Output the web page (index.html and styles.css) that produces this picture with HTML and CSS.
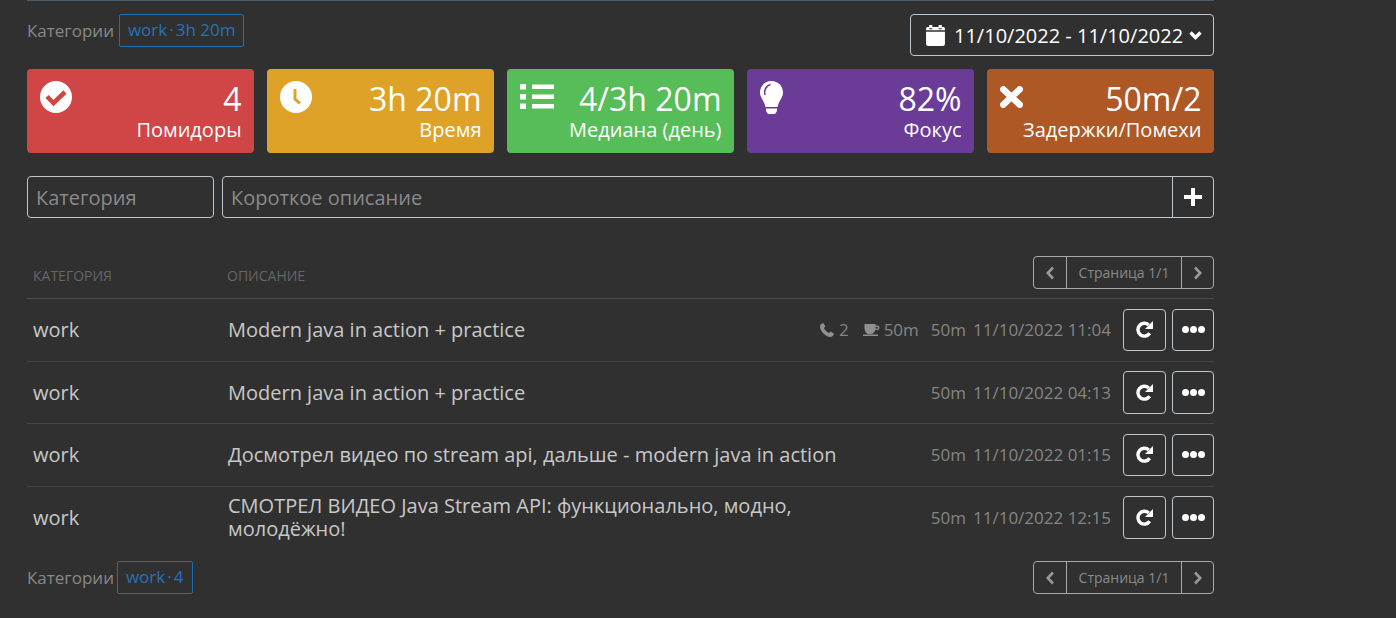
FILE: index.html
```html
<!DOCTYPE html>
<html lang="ru">
<head>
<meta charset="utf-8">
<title>Помидоры</title>
<link rel="stylesheet" href="styles.css">
</head>
<body>
<main class="page">
  <header class="top">
    <div class="cats"><span class="cats-label">Категории</span><a class="tag">work<i class="dot">·</i>3h 20m</a></div>
    <button class="date">
      <svg class="date-cal" viewBox="0 0 18 20"><path fill="#fff" d="M3 0h3v3H3zM12 0h3v3h-3zM1.500 2H3v2h3V2h6v2h3V2h1.500A1.500 1.500 0 0 1 18 3.500V5H0V3.500A1.500 1.500 0 0 1 1.500 2zM0 6.500h18V18a2 2 0 0 1-2 2H2a2 2 0 0 1-2-2z"/></svg>
      <span>11/10/2022 - 11/10/2022</span>
      <svg class="date-chev" viewBox="0 0 13 9"><path fill="none" stroke="#fff" stroke-width="3.400" d="M1.500 1.500 6.500 6.500l5-5"/></svg>
    </button>
  </header>

  <section class="stats">
    <div class="stat red">
      <svg class="ico" viewBox="0 0 32 32"><circle cx="16" cy="16" r="16" fill="#fff"/><path fill="none" stroke="#d04545" stroke-width="4.500" d="m7 15.500 6.500 6.500L25 11"/></svg>
      <div class="stat-text"><div class="val">4</div><div class="lab">Помидоры</div></div>
    </div>
    <div class="stat amber">
      <svg class="ico" viewBox="0 0 32 32"><circle cx="16" cy="16" r="16" fill="#fff"/><path fill="none" stroke="#dfa228" stroke-width="3" d="M15 8v10l5 4.500"/></svg>
      <div class="stat-text"><div class="val">3h 20m</div><div class="lab">Время</div></div>
    </div>
    <div class="stat green">
      <svg class="ico list" viewBox="0 0 34 25"><path fill="#fff" d="M0 0h6v5.500H0zM0 10h6v5.500H0zM0 19.500h6V25H0zM12 .5h22v4.500H12zM12 10.500h22v4.500H12zM12 20h22v4.500H12z"/></svg>
      <div class="stat-text"><div class="val">4/3h 20m</div><div class="lab">Медиана (день)</div></div>
    </div>
    <div class="stat purple">
      <svg class="ico bulb" viewBox="0 0 23 33"><path fill="#fff" d="M11.500 0C5 0 0 5 0 11.500c0 5 4 8 5.500 14.500h12C19 19.500 23 16.500 23 11.500 23 5 18 0 11.500 0zM6 27.500h11V30l-2 3H8l-2-3z"/><path fill="none" stroke="#6a3c98" stroke-width="1.600" d="M5 14c-1.500-5 1.500-9.500 5.500-10.500"/></svg>
      <div class="stat-text"><div class="val">82%</div><div class="lab">Фокус</div></div>
    </div>
    <div class="stat rust">
      <svg class="ico cross" viewBox="0 0 23 22"><path fill="none" stroke="#fff" stroke-width="6.500" stroke-linecap="round" d="M3.300 3.300l16.400 15.400M19.700 3.300 3.300 18.700"/></svg>
      <div class="stat-text"><div class="val">50m/2</div><div class="lab">Задержки/Помехи</div></div>
    </div>
  </section>

  <form class="add">
    <input class="field field-cat" placeholder="Категория">
    <div class="add-group">
      <input class="field field-desc" placeholder="Короткое описание">
      <button class="add-btn" type="button"><svg viewBox="0 0 18 18"><path fill="#fff" d="M7 0h4v7h7v4h-7v7H7v-7H0V7h7z"/></svg></button>
    </div>
  </form>

  <div class="thead">
    <span class="th th-cat">КАТЕГОРИЯ</span>
    <span class="th th-desc">ОПИСАНИЕ</span>
    <div class="pager">
      <button class="pg-arrow"><svg viewBox="0 0 10 14"><path fill="none" stroke="#999" stroke-width="2.600" d="M8 1.500 2.800 7 8 12.500"/></svg></button>
      <span class="pg-label">Страница 1/1</span>
      <button class="pg-arrow"><svg viewBox="0 0 10 14"><path fill="none" stroke="#999" stroke-width="2.600" d="M2 1.500 7.200 7 2 12.500"/></svg></button>
    </div>
  </div>

  <div class="row">
    <div class="c-cat">work</div>
    <div class="c-desc">Modern java in action + practice</div>
    <div class="c-meta">
      <span class="m-int"><svg class="m-ico" viewBox="0 0 14 14"><path fill="#8f8f8f" d="M3.200 0 5.500 3.300 4 5c.6 1.800 2.800 4 5 5l1.700-1.500L14 10.800c-.3 1.700-2 3.200-3.500 3.200C5.500 14 0 8 0 3.500 0 2 1.500.3 3.200 0z"/></svg>2</span>
      <span class="m-int"><svg class="m-ico cup" viewBox="0 0 17 12"><path fill="#8f8f8f" d="M1.500 0h11v1.500h1.700a2.300 2.300 0 0 1 0 4.600h-2C11.700 8 10.500 9.500 9 10H5C3 9.300 1.500 7 1.500 4zM12.600 2.900v1.900h1.400a.95.95 0 0 0 0-1.900zM0 10.500h15V12H0z"/></svg>50m</span>
      <span class="m-dur">50m</span>
      <span class="m-date">11/10/2022 11:04</span>
    </div>
    <div class="c-acts">
      <button class="act act-r"><svg viewBox="0 0 18 18"><path fill="none" stroke="#fff" stroke-width="3.600" d="M14.500 13A6.800 6.800 0 1 1 13.500 4.200"/><path fill="#fff" d="M18 0v8.500h-8.500z"/></svg></button>
      <button class="act act-d"><svg viewBox="0 0 23 7"><circle cx="3.500" cy="3.500" r="3.500" fill="#fff"/><circle cx="11.500" cy="3.500" r="3.500" fill="#fff"/><circle cx="19.500" cy="3.500" r="3.500" fill="#fff"/></svg></button>
    </div>
  </div>
  <div class="row">
    <div class="c-cat">work</div>
    <div class="c-desc">Modern java in action + practice</div>
    <div class="c-meta"><span class="m-dur">50m</span><span class="m-date">11/10/2022 04:13</span></div>
    <div class="c-acts">
      <button class="act act-r"><svg viewBox="0 0 18 18"><path fill="none" stroke="#fff" stroke-width="3.600" d="M14.500 13A6.800 6.800 0 1 1 13.500 4.200"/><path fill="#fff" d="M18 0v8.500h-8.500z"/></svg></button>
      <button class="act act-d"><svg viewBox="0 0 23 7"><circle cx="3.500" cy="3.500" r="3.500" fill="#fff"/><circle cx="11.500" cy="3.500" r="3.500" fill="#fff"/><circle cx="19.500" cy="3.500" r="3.500" fill="#fff"/></svg></button>
    </div>
  </div>
  <div class="row">
    <div class="c-cat">work</div>
    <div class="c-desc">Досмотрел видео по stream api, дальше - modern java in action</div>
    <div class="c-meta"><span class="m-dur">50m</span><span class="m-date">11/10/2022 01:15</span></div>
    <div class="c-acts">
      <button class="act act-r"><svg viewBox="0 0 18 18"><path fill="none" stroke="#fff" stroke-width="3.600" d="M14.500 13A6.800 6.800 0 1 1 13.500 4.200"/><path fill="#fff" d="M18 0v8.500h-8.500z"/></svg></button>
      <button class="act act-d"><svg viewBox="0 0 23 7"><circle cx="3.500" cy="3.500" r="3.500" fill="#fff"/><circle cx="11.500" cy="3.500" r="3.500" fill="#fff"/><circle cx="19.500" cy="3.500" r="3.500" fill="#fff"/></svg></button>
    </div>
  </div>
  <div class="row">
    <div class="c-cat">work</div>
    <div class="c-desc c-narrow">СМОТРЕЛ ВИДЕО Java Stream API: функционально, модно, молодёжно!</div>
    <div class="c-meta"><span class="m-dur">50m</span><span class="m-date">11/10/2022 12:15</span></div>
    <div class="c-acts">
      <button class="act act-r"><svg viewBox="0 0 18 18"><path fill="none" stroke="#fff" stroke-width="3.600" d="M14.500 13A6.800 6.800 0 1 1 13.500 4.200"/><path fill="#fff" d="M18 0v8.500h-8.500z"/></svg></button>
      <button class="act act-d"><svg viewBox="0 0 23 7"><circle cx="3.500" cy="3.500" r="3.500" fill="#fff"/><circle cx="11.500" cy="3.500" r="3.500" fill="#fff"/><circle cx="19.500" cy="3.500" r="3.500" fill="#fff"/></svg></button>
    </div>
  </div>

  <footer class="foot">
    <div class="cats"><span class="cats-label">Категории</span><a class="tag tag-foot">work<i class="dot">·</i>4</a></div>
    <div class="pager">
      <button class="pg-arrow"><svg viewBox="0 0 10 14"><path fill="none" stroke="#999" stroke-width="2.600" d="M8 1.500 2.800 7 8 12.500"/></svg></button>
      <span class="pg-label">Страница 1/1</span>
      <button class="pg-arrow"><svg viewBox="0 0 10 14"><path fill="none" stroke="#999" stroke-width="2.600" d="M2 1.500 7.200 7 2 12.500"/></svg></button>
    </div>
  </footer>
</main>
</body>
</html>
```
FILE: styles.css
```css
* { box-sizing: border-box; }
html, body { margin: 0; padding: 0; height: 100%; overflow: hidden; }
body {
  background: #303030;
  color: #c8c8c8;
  font-family: "Open Sans", "Noto Sans", sans-serif;
  font-size: 20px;
}
button { font-family: inherit; background: transparent; cursor: pointer; padding: 0; color: #fff; }
.page {
  width: 1187px;
  margin-left: 27px;
  border-top: 1px solid #4e5d68;
  padding-top: 13px;
}
.top { display: flex; justify-content: space-between; align-items: flex-start; height: 55px; }
.cats { display: flex; align-items: center; height: 33px; }
.cats-label { color: #888; font-size: 17px; margin-right: 5px; line-height: 33px; }
.tag {
  display: inline-flex;
  align-items: center;
  height: 33px;
  padding: 0 8px 2px;
  border: 1px solid #1f6fb2;
  border-radius: 2px;
  color: #2a70b5;
  font-size: 17px;
}
.tag-foot { margin-left: -2px; padding-right: 9px; }
.dot { font-style: normal; margin: 0 2px; }
.date {
  width: 304px;
  height: 42px;
  border: 1px solid #c0c6c9;
  border-radius: 4px;
  display: flex;
  align-items: center;
  padding-left: 15px;
  font-size: 20px;
  color: #fff;
}
.date-cal { width: 19px; height: 21px; margin-right: 9px; }
.date-chev { width: 13px; height: 9px; margin-left: 6px; }

.stats { display: grid; grid-template-columns: repeat(5, 227px); column-gap: 13px; }
.stat {
  height: 84px;
  border-radius: 4px;
  color: #fff;
  display: flex;
  justify-content: space-between;
  padding: 12px 12.5px 0;
}
.red { background: #d04545; }
.amber { background: #dfa228; }
.green { background: #56bd58; }
.purple { background: #6a3c98; }
.rust { background: #ae5826; }
.ico { width: 32px; height: 32px; flex: none; }
.list { width: 34px; height: 25px; margin-top: 3px; }
.bulb { width: 23px; height: 33px; }
.cross { width: 23px; height: 22px; margin-top: 5px; }
.stat-text { text-align: right; white-space: nowrap; margin-top: -1px; }
.val { font-size: 32px; line-height: 38px; }
.lab { font-size: 20px; line-height: 24px; }

.add { display: flex; gap: 8px; margin-top: 23px; height: 42px; }
.field {
  height: 42px;
  background: transparent;
  border: 1px solid #c0c6c9;
  border-radius: 4px;
  padding: 0 8px;
  font-family: inherit;
  font-size: 20px;
  color: #ccc;
  outline: none;
}
.field::placeholder { color: #8a8a8a; opacity: 1; }
.field-cat { width: 187px; }
.add-group { display: flex; flex: 1; }
.field-desc { flex: 1; border-radius: 4px 0 0 4px; }
.add-btn {
  width: 42px;
  height: 42px;
  margin-left: -1px;
  border: 1px solid #c0c6c9;
  border-radius: 0 4px 4px 0;
  display: flex;
  align-items: center;
  justify-content: center;
}
.add-btn svg { width: 18px; height: 18px; }

.thead {
  display: flex;
  align-items: flex-start;
  height: 42px;
  margin-top: 38px;
  border-bottom: 1px solid #4c4c4c;
  box-sizing: content-box;
}
.th { color: #666; font-size: 14px; line-height: 18px; padding-top: 11px; }
.th-cat { width: 200px; padding-left: 6px; }
.th-desc { flex: 1; }
.pager {
  display: flex;
  height: 33px;
  width: 181px;
  border: 1px solid #a8a8a8;
  border-radius: 4px;
}
.pg-arrow {
  width: 32px;
  flex: none;
  border: 0;
  display: flex;
  align-items: center;
  justify-content: center;
}
.pg-arrow:last-child { width: 31px; }
.pg-arrow svg { width: 10px; height: 14px; }
.pg-label {
  flex: 1;
  text-align: center;
  color: #8a8a8a;
  font-size: 14px;
  line-height: 32px;
  border-left: 1px solid #a8a8a8;
  border-right: 1px solid #a8a8a8;
}

.row {
  display: flex;
  align-items: center;
  height: 62.5px;
  border-bottom: 1px solid #454545;
}
.row:last-of-type { border-bottom-color: transparent; }
.c-cat { width: 201px; padding-left: 6px; flex: none; }
.c-desc { flex: 1; line-height: 23px; color: #c8c8c8; }
.c-narrow { padding-right: 80px; }
.c-meta { display: flex; align-items: center; color: #858585; font-size: 17px; flex: none; }
.m-int { display: inline-flex; align-items: center; margin-right: 14px; }
.m-int + .m-int { margin-right: 12px; }
.m-ico { width: 14px; height: 14px; margin-right: 5px; }
.cup { width: 17px; height: 12px; margin-right: 4px; }
.m-dur { margin-right: 7px; }
.c-acts { display: flex; gap: 6px; margin-left: 12px; flex: none; }
.act {
  height: 42.5px;
  border: 1px solid #c0c6c9;
  border-radius: 4px;
  display: flex;
  align-items: center;
  justify-content: center;
}
.act-r { width: 43px; }
.act-d { width: 42px; }
.act-r svg { width: 17px; height: 17px; }
.act-d svg { width: 23px; height: 7px; }

.foot {
  display: flex;
  justify-content: space-between;
  align-items: center;
  margin-top: 12px;
}
```
